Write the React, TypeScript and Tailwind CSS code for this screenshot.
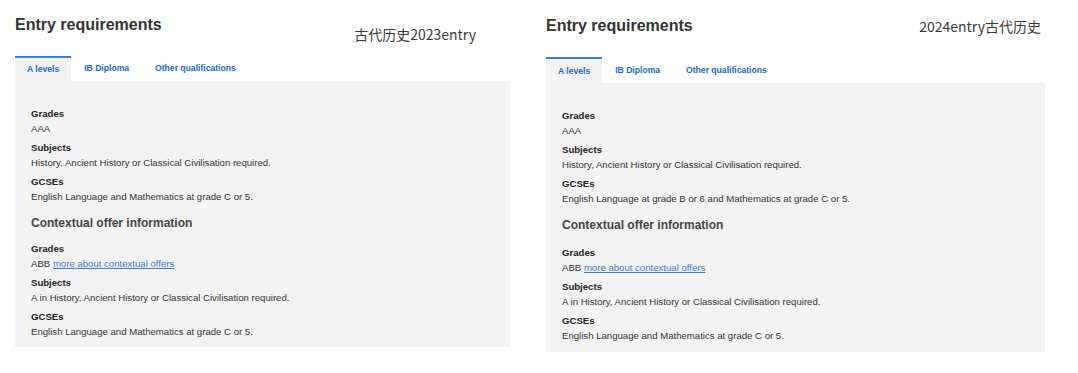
import React from "react";

type ItemProps = { label: string; children: React.ReactNode; gap: string };

function Item({ label, children, gap }: ItemProps) {
  return (
    <div className={gap}>
      <div className="font-bold text-[#222] leading-[15px]">{label}</div>
      <div className="leading-[15px] text-[#333]">{children}</div>
    </div>
  );
}

type ColumnProps = {
  note: string;
  noteClass: string;
  tabsMt: string;
  width: string;
  gcse: string;
  variant: "left" | "right";
};

function Column({ note, noteClass, tabsMt, width, gcse, variant }: ColumnProps) {
  const gap = "mt-[4px]";
  const tabH = variant === "left" ? "h-[25px]" : "h-[26px]";
  return (
    <div className={width}>
      <div className="flex items-start">
        <h2 className="text-[16px] font-bold leading-[20px] text-[#333]">Entry requirements</h2>
        <div
          className={`ml-auto text-[14px] leading-[20px] text-[#3a3a3a] ${noteClass}`}
          style={{ fontFamily: '"Noto Sans CJK SC", "Noto Sans", sans-serif' }}
        >
          {note}
        </div>
      </div>
      <div className={`${tabsMt} flex text-[8.6px] font-bold text-[#2168cc]`}>
        <div className={`${tabH} flex items-center border-t-2 border-[#3580e0] bg-[#f3f3f3] px-3`}>A levels</div>
        <div className={`${tabH} flex items-center px-[13px]`}>IB Diploma</div>
        <div className={`${tabH} flex items-center px-[13px]`}>Other qualifications</div>
      </div>
      <div
        className={`bg-[#f3f3f3] px-4 text-[9.6px] ${
          variant === "left" ? "pt-[25px] pb-[8px]" : "pt-[25px] pb-[9px]"
        }`}
      >
        <Item label="Grades" gap="">AAA</Item>
        <Item label="Subjects" gap={gap}>History, Ancient History or Classical Civilisation required.</Item>
        <Item label="GCSEs" gap={gap}>{gcse}</Item>
        <h3
          className={`mt-[11px] text-[12px] font-bold leading-[16px] text-[#444] ${
            variant === "left" ? "mb-[10px]" : "mb-[12px]"
          }`}
        >
          Contextual offer information
        </h3>
        <Item label="Grades" gap="">
          ABB{" "}
          <a href="#" className="text-[#3b7bdc] underline">
            more about contextual offers
          </a>
        </Item>
        <Item label="Subjects" gap={gap}>A in History, Ancient History or Classical Civilisation required.</Item>
        <Item label="GCSEs" gap={gap}>English Language and Mathematics at grade C or 5.</Item>
      </div>
    </div>
  );
}

export default function App() {
  return (
    <div
      className="flex w-[1078px] h-[373px] bg-white pl-[15px] pt-[15px]"
      style={{ fontFamily: '"Liberation Sans", Arial, sans-serif' }}
    >
      <Column
        variant="left"
        width="w-[495px]"
        note="古代历史2023entry"
        noteClass="mt-[9px] mr-[34px]"
        tabsMt="mt-[12px]"
        gcse="English Language and Mathematics at grade C or 5."
      />
      <div className="ml-[36px] pt-[1px]">
        <Column
          variant="right"
          width="w-[499px]"
          note="2024entry古代历史"
          noteClass="mr-[4px]"
          tabsMt="mt-[21px]"
          gcse="English Language at grade B or 6 and Mathematics at grade C or 5."
        />
      </div>
    </div>
  );
}
